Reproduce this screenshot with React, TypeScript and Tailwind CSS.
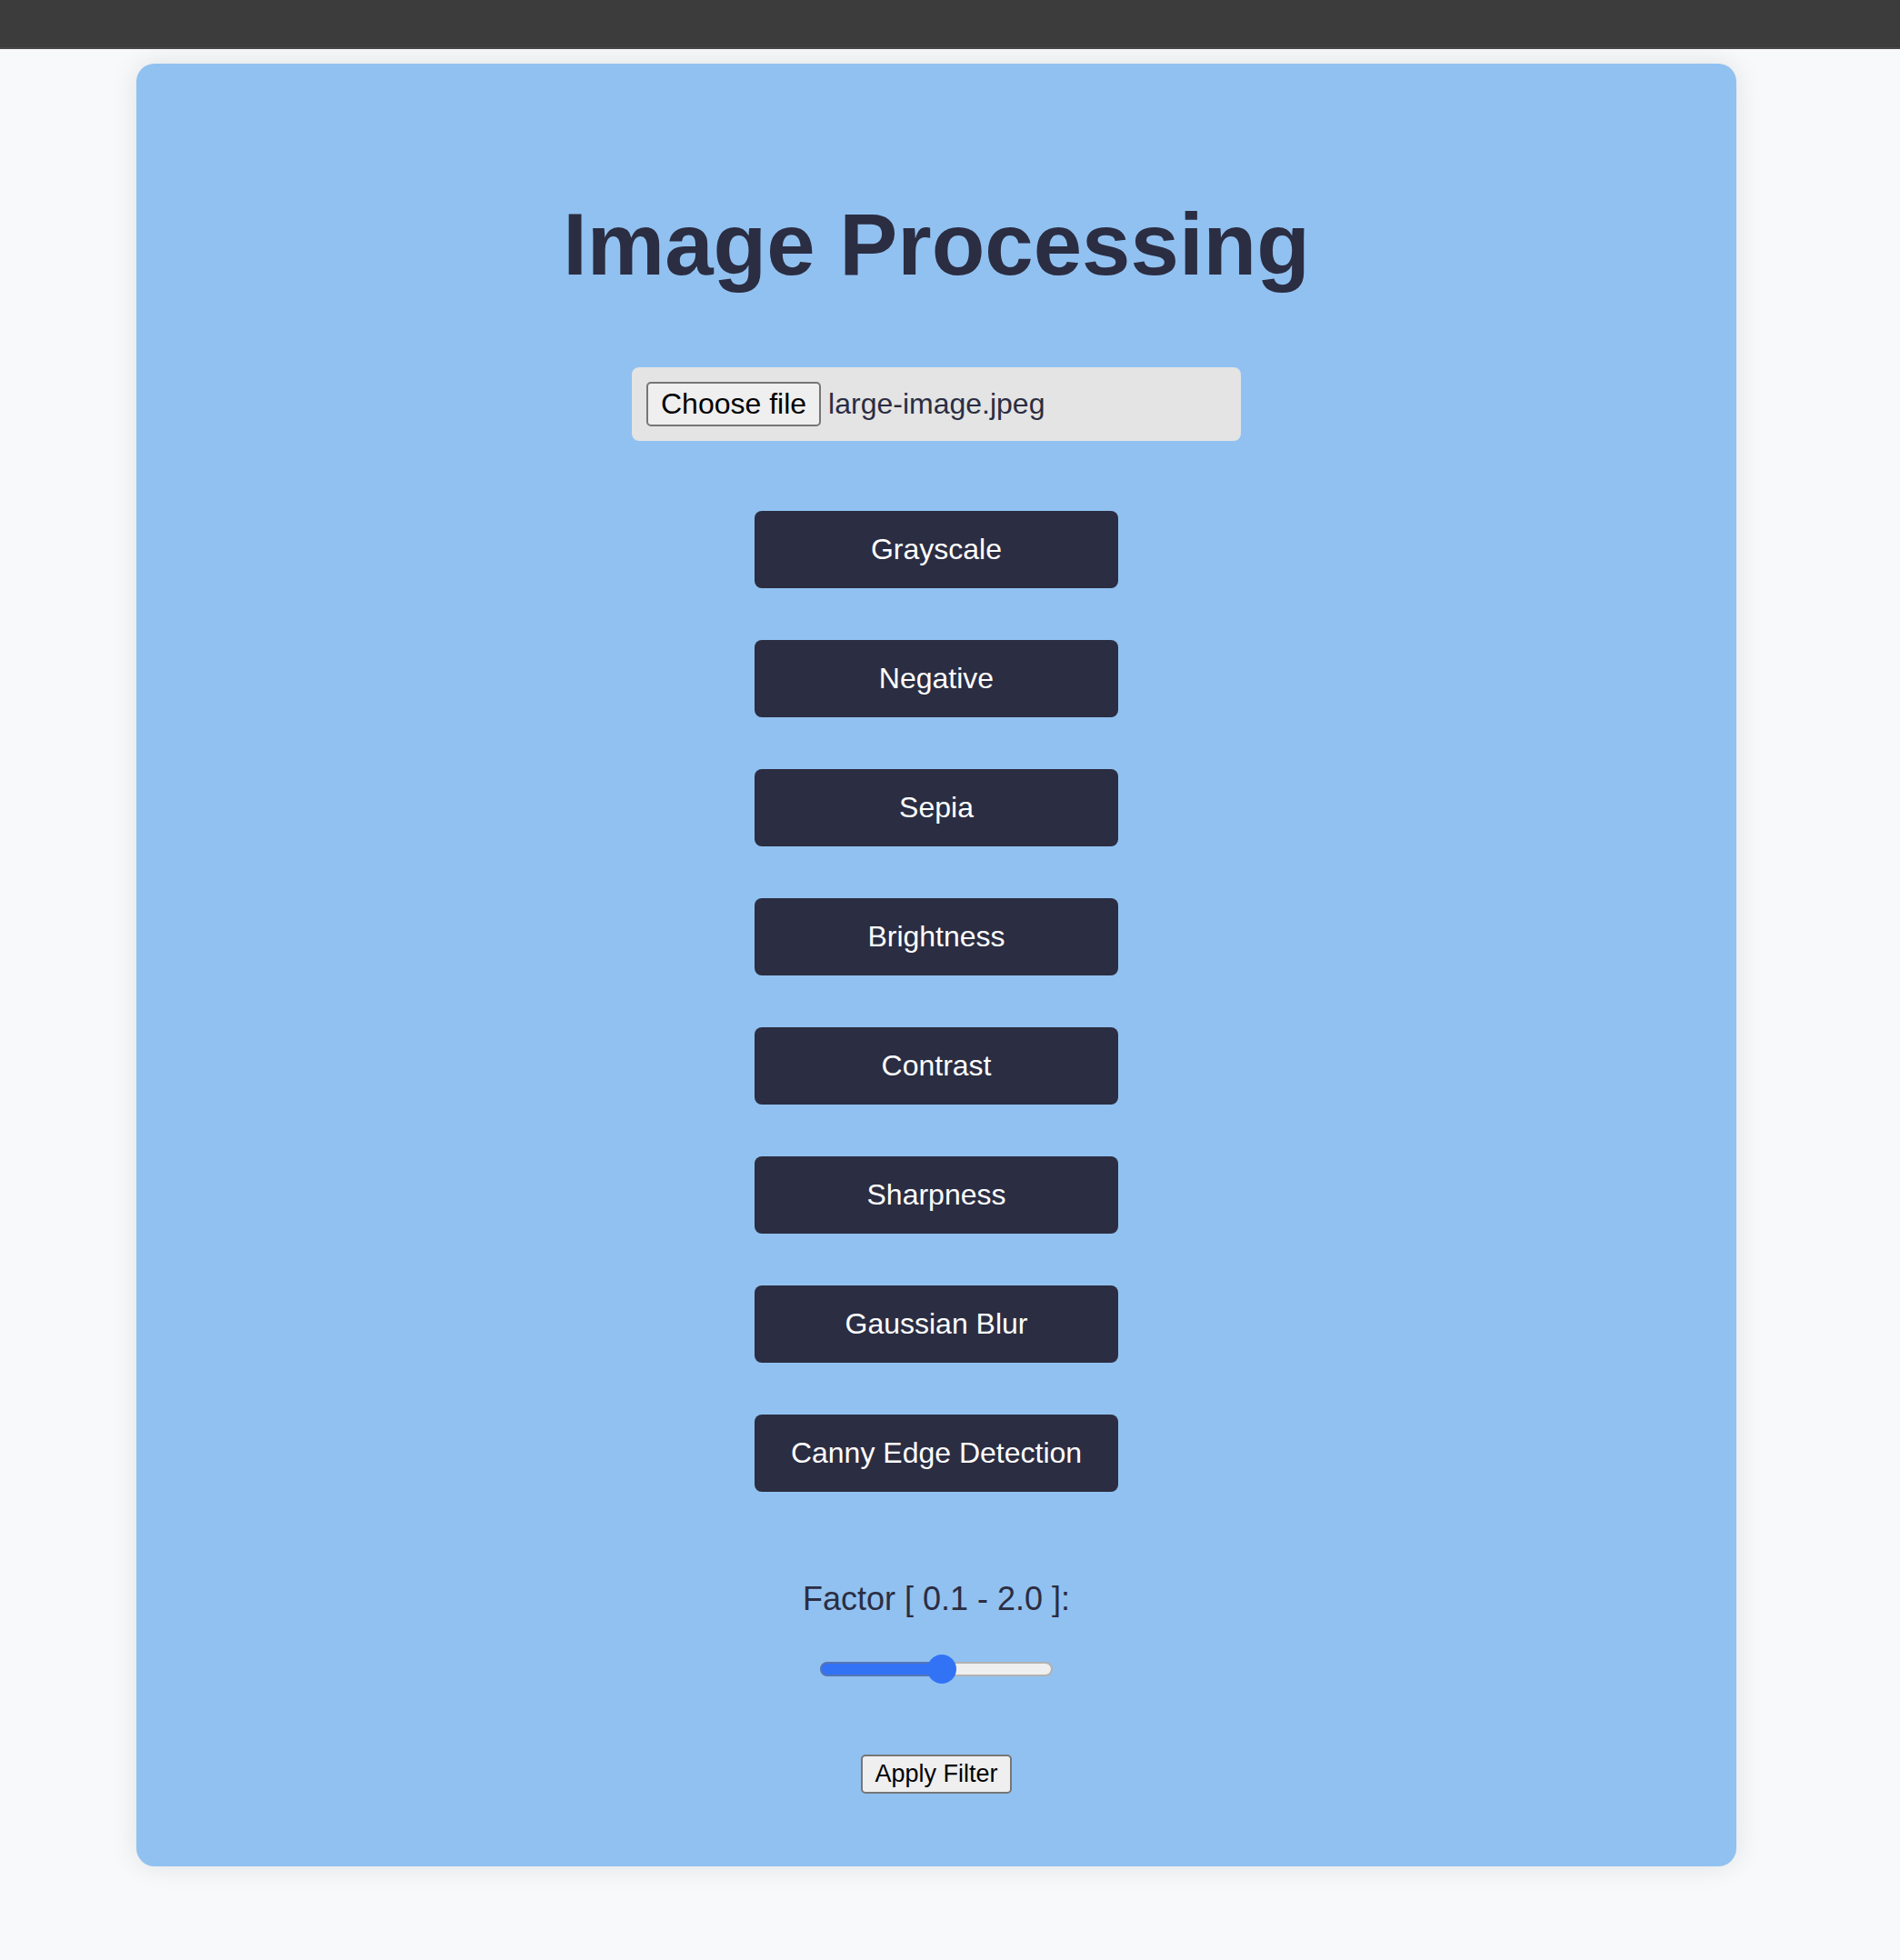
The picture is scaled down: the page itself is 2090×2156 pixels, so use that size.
import { useState } from 'react';

const FILTERS = [
  'Grayscale',
  'Negative',
  'Sepia',
  'Brightness',
  'Contrast',
  'Sharpness',
  'Gaussian Blur',
  'Canny Edge Detection',
];

const MIN = 0.1;
const MAX = 2;
const SLIDER_WIDTH = 256;
const THUMB = 32;

function FilePicker() {
  const [name, setName] = useState('large-image.jpeg');
  return (
    <label
      htmlFor="image-file"
      className="flex w-full max-w-[670px] cursor-pointer items-center gap-2 rounded-lg bg-[#e4e4e4] p-4 text-[32px] leading-[37px]"
    >
      <input
        id="image-file"
        type="file"
        accept="image/*"
        className="peer sr-only"
        onChange={(e) => setName(e.target.files?.[0]?.name ?? 'No file chosen')}
      />
      <span className="rounded-[5px] border-2 border-[#767676] bg-[#efefef] px-[14px] py-1 text-black peer-focus-visible:outline-2">
        Choose file
      </span>
      <span>{name}</span>
    </label>
  );
}

function FactorSlider() {
  const [value, setValue] = useState(1.1);
  const ratio = (value - MIN) / (MAX - MIN);
  const fill = THUMB / 2 + ratio * (SLIDER_WIDTH - THUMB);
  return (
    <div className="flex flex-col items-center gap-[41px]">
      <label htmlFor="factor" className="text-4xl leading-10">
        Factor [ 0.1 - 2.0 ]:
      </label>
      <input
        id="factor"
        type="range"
        min={MIN}
        max={MAX}
        step={0.1}
        value={value}
        onChange={(e) => setValue(Number(e.target.value))}
        style={{
          backgroundImage: `linear-gradient(to right, #3273f6 ${fill}px, #efefef ${fill}px)`,
        }}
        className="my-2 h-4 w-64 appearance-none rounded-full border-2 border-[#767676]/50 bg-origin-border [&::-webkit-slider-thumb]:size-8 [&::-webkit-slider-thumb]:appearance-none [&::-webkit-slider-thumb]:rounded-full [&::-webkit-slider-thumb]:bg-[#3273f6]"
      />
    </div>
  );
}

export default function App() {
  return (
    <div className="min-h-screen bg-[#f8f9fb] font-['Liberation_Sans',Arial,sans-serif] text-[#2b2d42]">
      <header className="h-[54px] border-b-2 border-[#4a4646] bg-[#3c3c3c]" />
      <div className="overflow-hidden pt-4 pr-[30px] pb-[103px]">
        <main className="mx-auto flex max-w-[1760px] flex-col items-center rounded-[20px] bg-[#91c1f0] pt-[143px] pb-20 shadow-[0_0_30px_rgba(0,0,0,0.1)]">
          <h1 className="mb-[79px] text-8xl leading-[112px] font-bold">Image Processing</h1>
          <FilePicker />
          <div className="mt-[77px] mb-[98px] flex w-full max-w-[400px] flex-col gap-[57px]">
            {FILTERS.map((filter) => (
              <button
                key={filter}
                type="button"
                className="cursor-pointer rounded-lg bg-[#2b2d42] py-6 text-[32px] leading-[37px] text-white"
              >
                {filter}
              </button>
            ))}
          </div>
          <FactorSlider />
          <button
            type="button"
            className="mt-[78px] cursor-pointer rounded-[5px] border-2 border-[#767676] bg-[#efefef] px-[13px] py-1 text-[27px] leading-[31px] text-black"
          >
            Apply Filter
          </button>
        </main>
      </div>
    </div>
  );
}
